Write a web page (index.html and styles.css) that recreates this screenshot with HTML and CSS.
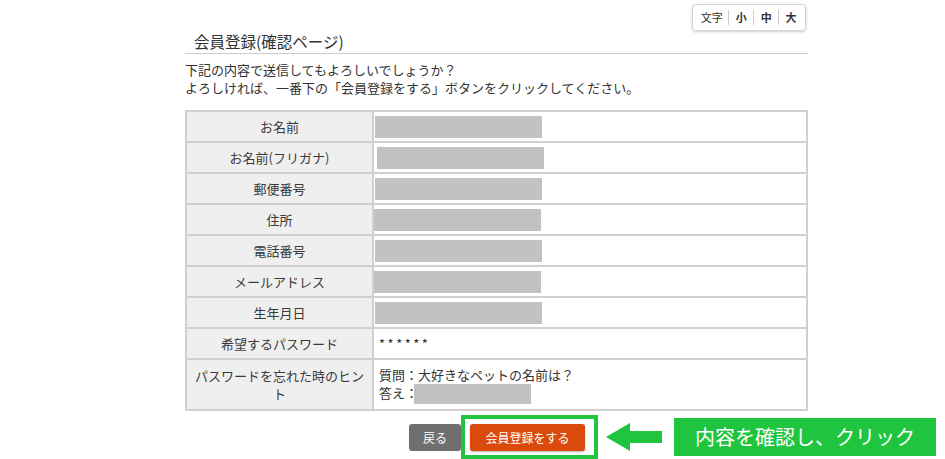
FILE: index.html
```html
<!DOCTYPE html>
<html lang="ja">
<head>
<meta charset="utf-8">
<link rel="stylesheet" href="styles.css">
</head>
<body>
<div class="page">
  <div class="fontbar">
    <div class="fontsize">
      <span class="fs-item fs-label">文字</span>
      <span class="fs-item">小</span>
      <span class="fs-item">中</span>
      <span class="fs-item">大</span>
    </div>
  </div>
  <h1 class="title">会員登録(確認ページ)</h1>
  <p class="intro">下記の内容で送信してもよろしいでしょうか？<br>よろしければ、一番下の「会員登録をする」ボタンをクリックしてください。</p>
  <table class="confirm">
    <tr><th>お名前</th><td><span class="mask"></span></td></tr>
    <tr><th>お名前(フリガナ)</th><td><span class="mask m2"></span></td></tr>
    <tr><th>郵便番号</th><td><span class="mask"></span></td></tr>
    <tr><th>住所</th><td><span class="mask m4"></span></td></tr>
    <tr><th>電話番号</th><td><span class="mask"></span></td></tr>
    <tr><th>メールアドレス</th><td><span class="mask m4"></span></td></tr>
    <tr><th>生年月日</th><td><span class="mask"></span></td></tr>
    <tr><th>希望するパスワード</th><td class="txt"><span class="stars">******</span></td></tr>
    <tr class="tall"><th>パスワードを忘れた時のヒント</th><td class="txt">質問：大好きなペットの名前は？<br>答え：<span class="mask small"></span></td></tr>
  </table>
  <div class="actions">
    <button class="btn back">戻る</button>
    <div class="frame"><button class="btn submit">会員登録をする</button></div>
    <svg class="arrow" width="56" height="30" viewBox="0 0 56 30"><polygon points="0,15 24,1 24,9 56,9 56,21 24,21 24,29" fill="#1fc53f"/></svg>
    <div class="note">内容を確認し、クリック</div>
  </div>
</div>
</body>
</html>
```
FILE: styles.css
```css
* { box-sizing: border-box; }
body {
  margin: 0;
  background: #fff;
  font-family: "Noto Sans CJK JP", "Noto Sans", sans-serif;
  color: #333;
  overflow: hidden;
}
.page {
  width: 623px;
  margin-left: 185px;
  padding-top: 4px;
}
.fontbar {
  display: flex;
  justify-content: flex-end;
  padding-right: 2px;
}
.fontsize {
  display: flex;
  align-items: center;
  height: 27px;
  width: 114px;
  border: 1px solid #d4d4d4;
  border-radius: 4px;
  box-shadow: 0 1px 3px rgba(0,0,0,0.2);
  padding: 0 2px;
  font-size: 11px;
  color: #333;
}
.fs-item {
  flex: 1;
  text-align: center;
  line-height: 15px;
  border-left: 1px solid #ccc;
  font-weight: bold;
}
.fs-item.fs-label {
  flex: 1.4;
  border-left: none;
  font-weight: normal;
}
.title {
  margin: 0;
  font-size: 15.5px;
  font-weight: normal;
  line-height: 20px;
  padding: 0 0 2px 9px;
  border-bottom: 1px solid #ccc;
  color: #333;
}
.intro {
  margin: 7px 0 0;
  font-size: 13px;
  line-height: 18px;
  color: #333;
}
.confirm {
  margin-top: 13px;
  width: 623px;
  border-collapse: collapse;
  font-size: 13px;
}
.confirm th, .confirm td {
  border: 2px solid #d0d0d0;
  height: 31px;
  padding: 0;
}
.confirm th {
  width: 187px;
  background: #efefef;
  font-weight: normal;
  text-align: center;
  color: #3a3a3a;
}
.confirm td {
  padding: 2px 4px 1px 1px;
  vertical-align: middle;
}
.confirm td.txt {
  padding-left: 5px;
  line-height: 18px;
}
.stars { letter-spacing: 2.5px; }
.confirm tr.tall th, .confirm tr.tall td { height: 51px; }
.confirm tr.tall th { padding: 0 4px; line-height: 18px; }
.mask {
  display: block;
  width: 167px;
  height: 22px;
  background: #c2c2c2;
}
.mask.m2 { margin-left: 2px; }
.mask.m4 { margin-left: -1px; }
.mask.small {
  display: inline-block;
  width: 117px;
  height: 20px;
  margin-left: -4px;
  vertical-align: middle;
}
.actions {
  display: flex;
  align-items: center;
  width: max-content;
  margin-top: 4px;
  margin-left: 224px;
}
.actions > * { flex-shrink: 0; }
.btn {
  border: none;
  font-family: inherit;
  font-size: 12px;
  color: #fff;
  height: 27px;
  border-radius: 3px;
  padding: 0;
  cursor: pointer;
}
.back {
  width: 52px;
  background: #6f6f6f;
}
.frame {
  width: 137px;
  height: 44px;
  border: 4px solid #1fc53f;
  display: flex;
  align-items: center;
  padding-left: 5px;
}
.submit {
  width: 115px;
  background: #d94a0c;
  box-shadow: 0 1px 2px rgba(0,0,0,0.3);
}
.arrow {
  margin-left: 8px;
  display: block;
}
.note {
  margin-left: 12px;
  width: 262px;
  height: 38px;
  background: #1fc53f;
  color: #fff;
  font-size: 20px;
  line-height: 38px;
  text-align: center;
}
```
